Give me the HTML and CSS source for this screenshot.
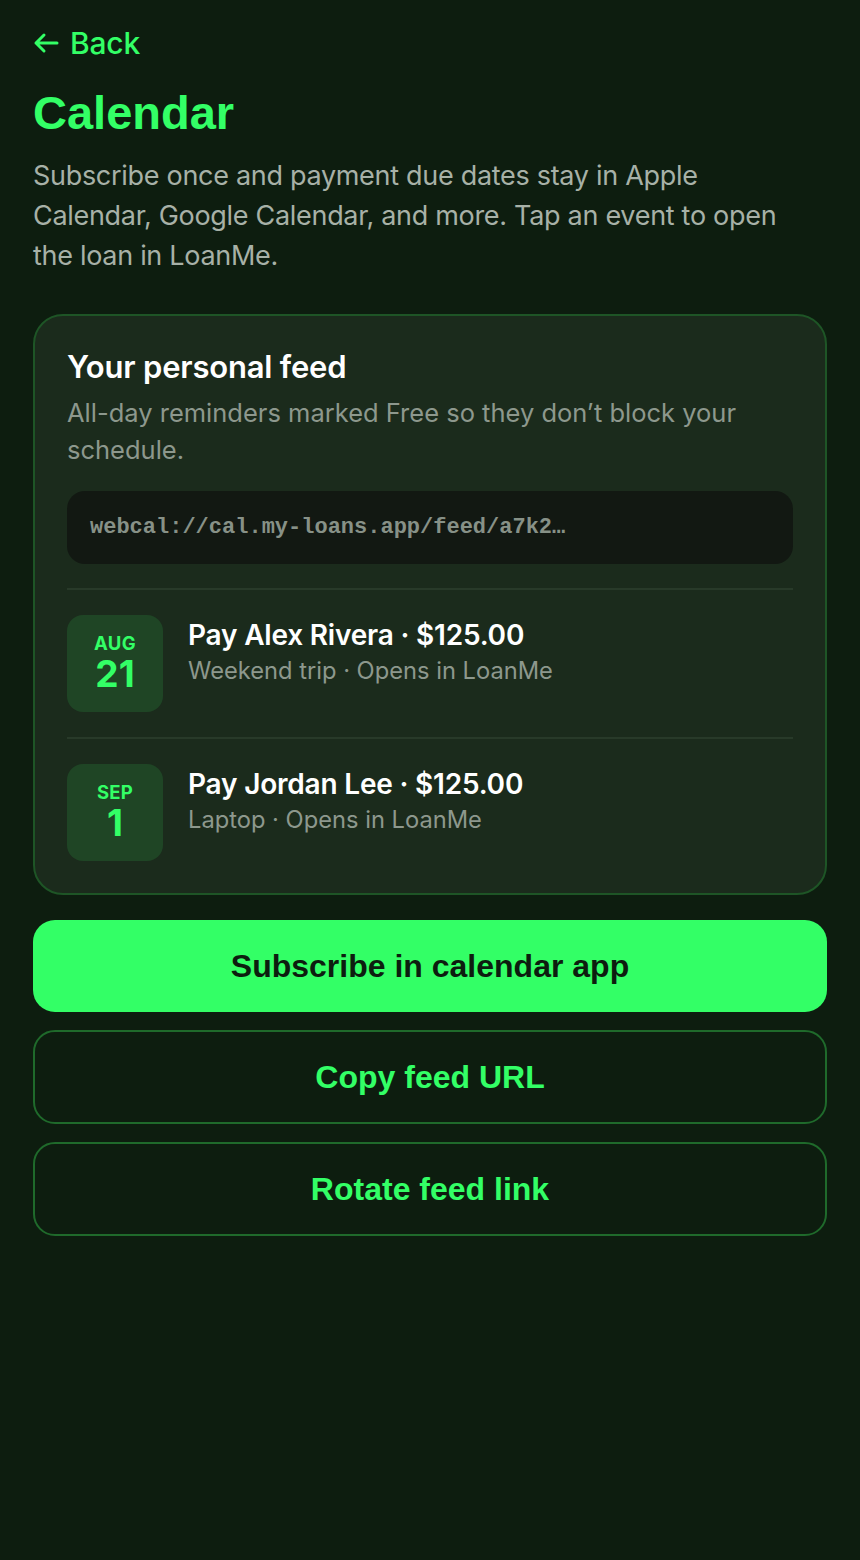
FILE: index.html
```html
<!DOCTYPE html>
<html lang="en">
<head>
    <meta charset="UTF-8">
    <meta name="viewport" content="width=device-width, initial-scale=1.0">
    <title>Calendar</title>
    <link rel="stylesheet" href="styles.css">
</head>
<body>
    <div class="page">
        <a class="back" href="#">
            <svg width="26" height="22" viewBox="0 0 26 22" fill="none" stroke="#33ff66" stroke-width="3" stroke-linecap="round" stroke-linejoin="round">
                <path d="M24 11H3M11 3L3 11l8 8"/>
            </svg>
            Back
        </a>
        <h1 class="title">Calendar</h1>
        <p class="intro">Subscribe once and payment due dates stay in Apple Calendar, Google Calendar, and more. Tap an event to open the loan in LoanMe.</p>

        <section class="card">
            <h2>Your personal feed</h2>
            <p class="card-sub">All-day reminders marked Free so they don’t block your schedule.</p>
            <div class="feed-url">webcal://cal.my-loans.app/feed/a7k2…</div>

            <ul class="events">
                <li class="event">
                    <div class="date">
                        <span class="mon">AUG</span>
                        <span class="day">21</span>
                    </div>
                    <div class="info">
                        <div class="event-title">Pay Alex Rivera · $125.00</div>
                        <div class="event-sub">Weekend trip · Opens in LoanMe</div>
                    </div>
                </li>
                <li class="event">
                    <div class="date">
                        <span class="mon">SEP</span>
                        <span class="day">1</span>
                    </div>
                    <div class="info">
                        <div class="event-title">Pay Jordan Lee · $125.00</div>
                        <div class="event-sub">Laptop · Opens in LoanMe</div>
                    </div>
                </li>
            </ul>
        </section>

        <div class="actions">
            <button class="btn primary">Subscribe in calendar app</button>
            <button class="btn outline">Copy feed URL</button>
            <button class="btn outline">Rotate feed link</button>
        </div>
    </div>
</body>
</html>
```

FILE: styles.css
```css
body {
    margin: 0;
    background-color: #0d1d0f;
    font-family: Inter, "Noto Sans", sans-serif;
    color: #ffffff;
}
.page {
    padding: 24px 33px 40px;
}
.back {
    display: inline-flex;
    align-items: center;
    gap: 11px;
    color: #33ff66;
    text-decoration: none;
    font-size: 30px;
    font-weight: 500;
    line-height: 38px;
    letter-spacing: -0.2px;
}
.title {
    font-family: "Liberation Sans", Arial, sans-serif;
    font-size: 47px;
    font-weight: 700;
    color: #33ff66;
    margin: 24px 0 0;
    line-height: 54px;
}
.intro {
    max-width: 780px;
    font-size: 27px;
    line-height: 40px;
    color: #a7b1a7;
    margin: 16px 0 0;
    letter-spacing: -0.3px;
}
.card {
    margin-top: 38px;
    background-color: #1b2b1c;
    border: 2px solid #1e5526;
    border-radius: 30px;
    padding: 30px 32px 7px;
}
.card h2 {
    margin: 0;
    font-size: 31px;
    font-weight: 600;
    line-height: 42px;
    letter-spacing: -0.2px;
}
.card-sub {
    margin: 6px 0 0;
    font-size: 25.5px;
    line-height: 37px;
    color: #8d988d;
}
.feed-url {
    margin-top: 23px;
    background-color: #121812;
    border-radius: 18px;
    height: 73px;
    padding: 0 23px;
    display: flex;
    align-items: center;
    font-family: "Liberation Mono", "Courier New", monospace;
    font-weight: 700;
    font-size: 22px;
    color: #879187;
}
.events {
    list-style: none;
    margin: 24px 0 0;
    padding: 0;
}
.event {
    display: flex;
    gap: 25px;
    border-top: 2px solid #283a29;
    padding: 25px 0;
}
.date {
    width: 96px;
    height: 97px;
    flex-shrink: 0;
    border-radius: 16px;
    background-color: #1f4525;
    color: #33ff66;
    display: flex;
    flex-direction: column;
    align-items: center;
    justify-content: center;
    font-weight: 700;
}
.mon {
    font-size: 18.5px;
    line-height: 21px;
    letter-spacing: 0.3px;
}
.day {
    font-size: 37px;
    line-height: 40px;
}
.info {
    padding-top: 2px;
}
.event-title {
    font-size: 28px;
    font-weight: 600;
    line-height: 36px;
    letter-spacing: -0.2px;
}
.event-sub {
    margin-top: 2px;
    font-size: 23.7px;
    line-height: 32px;
    color: #8d988d;
}
.actions {
    margin-top: 25px;
    display: flex;
    flex-direction: column;
    gap: 18px;
}
.btn {
    font-family: "Liberation Sans", Arial, sans-serif;
    font-weight: 700;
    font-size: 32px;
    border-radius: 22px;
    cursor: pointer;
    width: 100%;
}
.primary {
    height: 92px;
    background-color: #33ff66;
    color: #0d1d0f;
    border: none;
}
.outline {
    height: 94px;
    background-color: transparent;
    color: #33ff66;
    border: 2px solid #1f6a2b;
}
```
